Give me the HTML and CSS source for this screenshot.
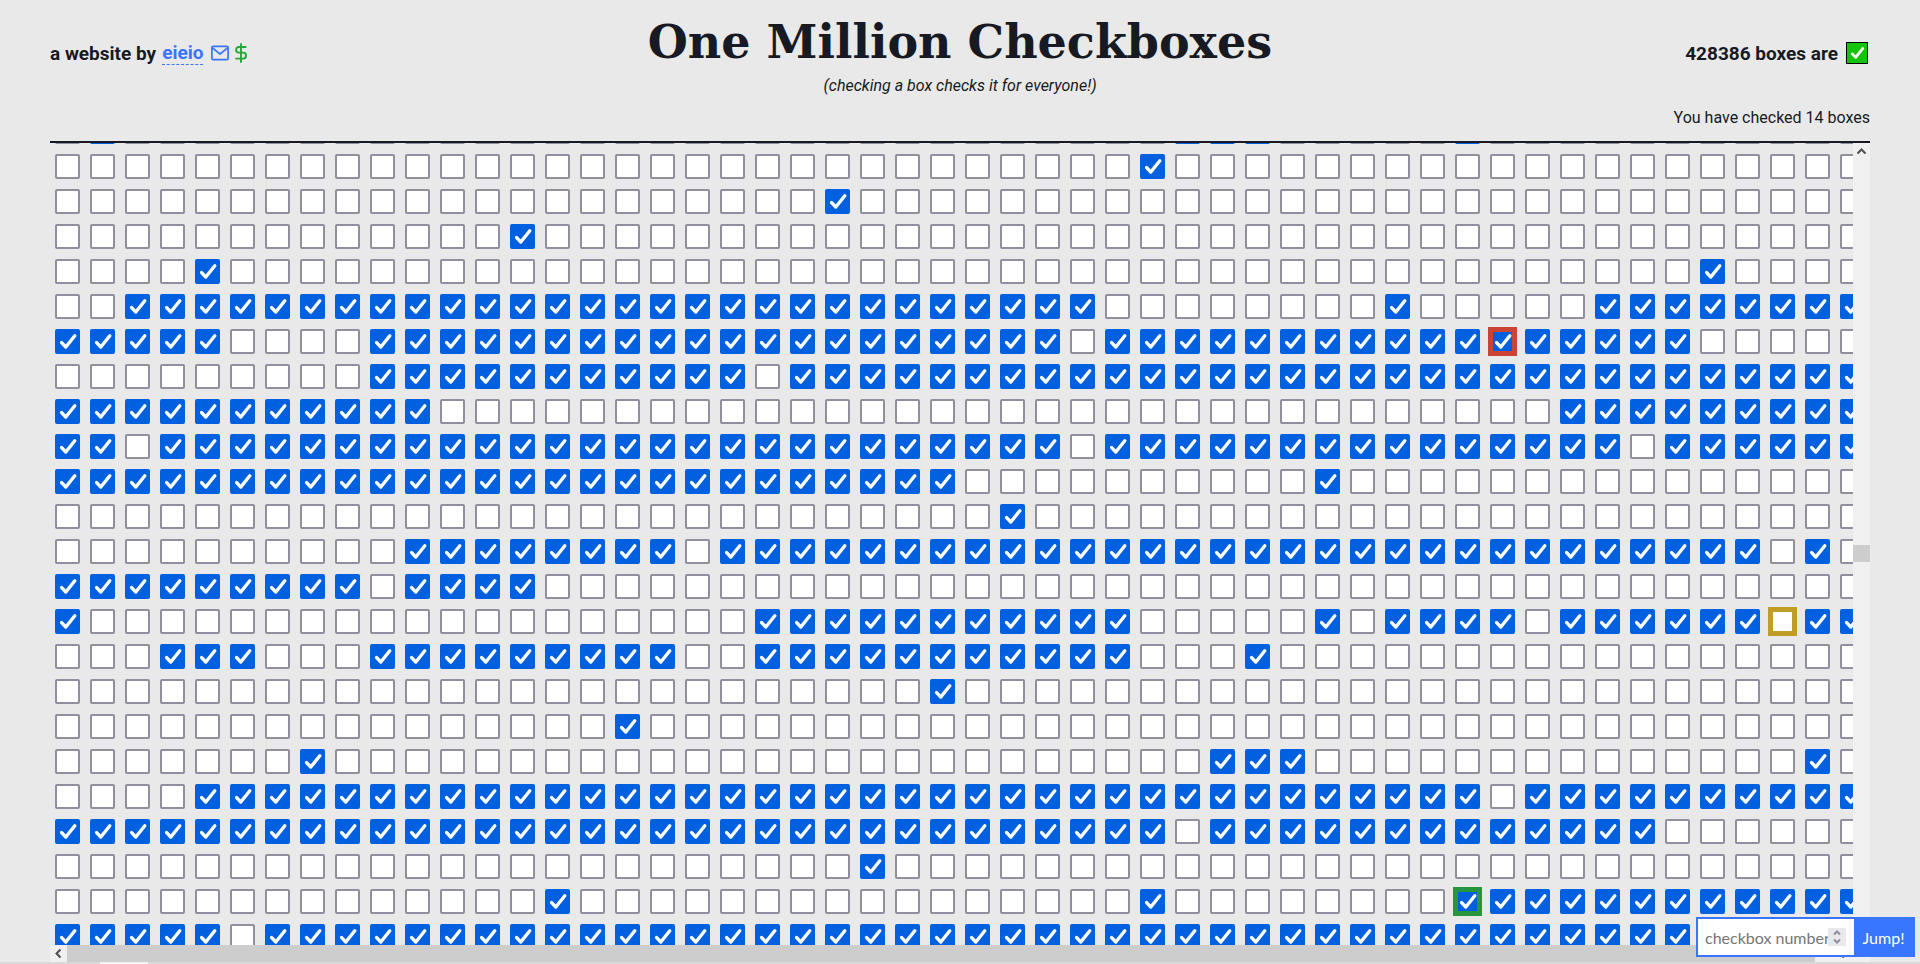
FILE: index.html
```html
<!DOCTYPE html>
<html lang="en">
<head>
<meta charset="utf-8">
<meta name="viewport" content="width=device-width, initial-scale=1">
<title>One Million Checkboxes</title>
<link rel="stylesheet" href="styles.css">
</head>
<body>

<!-- check mark shared by every box -->
<svg class="defs" aria-hidden="true">
  <symbol id="check" viewBox="0 0 25 25">
    <path d="M6.6 13.6 L10.8 18 L19.8 6.8" fill="none" stroke="#fff" stroke-width="3.4" stroke-linecap="round" stroke-linejoin="round"/>
  </symbol>
</svg>

<header class="header">
  <div class="byline">
    <span>a website by</span>
    <a class="author" href="#">eieio</a>
    <a class="icon-link" href="#" aria-label="email">
      <svg width="18" height="16" viewBox="0 0 18 16" fill="none" stroke="#3876ff" stroke-width="1.7" stroke-linejoin="round">
        <rect x="0.9" y="1.4" width="16.2" height="13.2" rx="1.2"/>
        <path d="M1 2.6 L9 9 L17 2.6"/>
      </svg>
    </a>
    <a class="icon-link" href="#" aria-label="donate">
      <svg width="12" height="20" viewBox="0 0 12 20" fill="none" stroke="#25a638" stroke-width="1.9" stroke-linecap="round" stroke-linejoin="round">
        <path d="M6 1 V19"/>
        <path d="M10.6 4 H3.8 C0.2 4 0.2 9.6 3.8 9.6 H8.2 C12 9.6 12 15.6 8.2 15.6 H1"/>
      </svg>
    </a>
  </div>
  <div class="heading">
    <h1>One Million Checkboxes</h1>
    <p class="subtitle">(checking a box checks it for everyone!)</p>
  </div>
  <div class="counts">
    <p class="total">428386 boxes are <span class="total-box"><svg width="20" height="20"><use href="#check"/></svg></span></p>
    <p class="mine">You have checked 14 boxes</p>
  </div>
</header>

<main class="board">
  <div class="viewport" id="viewport">
    <div class="grid" id="grid"></div>
  </div>
  <div class="scroll-y">
    <svg class="arrow" width="17" height="17"><path d="M4.5 10.5 L8.5 6.5 L12.5 10.5"/></svg>
    <div class="thumb-y"></div>
  </div>
  <div class="scroll-x">
    <svg class="arrow" width="17" height="17"><path d="M10.5 4.5 L6.5 8.5 L10.5 12.5"/></svg>
    <div class="thumb-x"></div>
    <svg class="arrow" width="17" height="17"><path d="M6.5 4.5 L10.5 8.5 L6.5 12.5"/></svg>
  </div>
  <div class="corner"></div>
</main>
<div class="edge"></div>

<form class="jump">
  <div class="field">
    <input type="text" inputmode="numeric" placeholder="checkbox number" aria-label="checkbox number">
    <svg class="spin" width="18" height="18"><path d="M6 6.5 L9 3.5 L12 6.5 M6 11.5 L9 14.5 L12 11.5"/></svg>
  </div>
  <button type="button">Jump!</button>
</form>

<script src="boxes.js"></script>
</body>
</html>
```
FILE: styles.css
```css
* {box-sizing: border-box}

body {
  margin: 0;
  height: 100vh;
  display: flex;
  flex-direction: column;
  overflow: hidden;
  background: #e9e9e9;
  color: #171a23;
  font-family: Roboto, sans-serif;
}

h1, p {margin: 0;}

.defs {
  position: absolute;
  width: 0;
  height: 0;
}

/* Header */
.header {
  display: grid;
  grid-template-columns: 1fr auto 1fr;
  height: 141px;
  padding: 0 50px;
}

.byline {
  display: flex;
  align-items: center;
  height: 28px;
  margin-top: 39px;
  gap: 6px;
  font-size: 19px;
  font-weight: 700;
}

.author {
  color: #3876ff;
  text-decoration: none;
  line-height: 23px;
  border-bottom: 1px dashed #3876ff;
}

.icon-link {
  display: flex;
  margin-left: 2px;
}

.icon-link + .icon-link {
  margin-left: 0;
}

.heading {
  text-align: center;
}

h1 {
  margin-top: 8px;
  font-family: "DejaVu Serif", serif;
  font-size: 46px;
  font-weight: 700;
  line-height: 68px;
}

.subtitle {
  font-size: 16px;
  font-style: italic;
  line-height: 20px;
}

.counts {
  text-align: right;
}

.total {
  display: flex;
  justify-content: flex-end;
  align-items: center;
  gap: 8px;
  height: 28px;
  margin-top: 39px;
  padding-right: 2px;
  font-size: 19px;
  font-weight: 700;
}

.total-box {
  display: flex;
  width: 22px;
  height: 22px;
  background: #14c40c;
  border: 1px solid #000;
}

.mine {
  margin-top: 41px;
  font-size: 16px;
  line-height: 20px;
}

/* Board */
.board {
  flex: 1;
  min-height: 0;
  display: grid;
  grid-template-columns: 1fr 17px;
  grid-template-rows: 1fr 17px;
  margin: 0 50px;
  border-top: 2px solid #171a23;
}

.viewport {
  min-width: 0;
  min-height: 0;
  overflow: hidden;
}

.grid {
  display: grid;
  grid-template-columns: repeat(52, 25px);
  grid-auto-rows: 25px;
  gap: 10px;
  padding: 0 5px;
}

.cell {
  display: grid;
}

.cell > * {
  grid-area: 1 / 1;
}

.cell input {
  appearance: none;
  width: 25px;
  height: 25px;
  margin: 0;
  background: #fff;
  border: 2px solid #8f8f9d;
  border-radius: 2px;
}

.cell input:checked {
  background: #0060df;
  border-color: #0060df;
}

.cell svg {
  width: 25px;
  height: 25px;
  pointer-events: none;
}

/* boxes picked out by colour */
.mark input {
  outline: 5px solid;
  outline-offset: -3px;
  border-radius: 0;
}

.red input {outline-color: #cb4335;}
.gold input {outline-color: #c09d27;}
.green input {outline-color: #27963c;}

/* Scrollbars */
.scroll-x, .scroll-y, .corner {
  background: #f0f0f0;
}

.scroll-y {
  display: flex;
  flex-direction: column;
  justify-content: space-between;
}

.thumb-y {
  height: 17px;
  margin-bottom: 383px;
  background: #cdcdcd;
}

.scroll-x {
  display: flex;
}

.thumb-x {
  flex: 1;
  margin-right: 21px;
  background: #cdcdcd;
}

.arrow {
  fill: none;
  stroke: #505050;
  stroke-width: 2;
}

.edge {
  height: 2px;
  background: linear-gradient(#f3f3f3, #f3f3f3) 100px 0 / 48px 2px no-repeat #d9d9d9;
}

/* Jump form */
.jump {
  position: absolute;
  right: 5px;
  bottom: 7px;
  display: flex;
  height: 40px;
  border: 2px solid #3876ff;
  background: #3876ff;
}

.field {
  display: flex;
  align-items: center;
  width: 156px;
  padding: 0 8px 0 7px;
  background: #fff;
}

.field input {
  flex: 1;
  min-width: 0;
  padding: 0;
  border: 0;
  outline: 0;
  font: 16px Lato, sans-serif;
}

.field input::placeholder {
  color: #757575;
}

.spin {
  background: #e9e9ed;
  fill: none;
  stroke: #8f8f9d;
  stroke-width: 2;
}

.jump button {
  width: 59px;
  padding: 0;
  border: 0;
  background: #3876ff;
  color: #fff;
  font: 16px Lato, sans-serif;
}
```
FILE: boxes.js
```js
var COLUMNS = 52;

// checked ranges of each row, [from, to] or a single column
var rows = [
  [1, [32, 34], 40],
  [31],
  [22],
  [13],
  [4, 47],
  [[2, 29], 38, [44, 51]],
  [[0, 4], [9, 28], [30, 46]],
  [[9, 19], [21, 51]],
  [[0, 10], [43, 51]],
  [[0, 1], [3, 28], [30, 44], [46, 51]],
  [[0, 25], 36],
  [27],
  [[10, 17], [19, 48], 50],
  [[0, 8], [10, 13]],
  [0, [20, 30], 36, [38, 41], [43, 48], [50, 51]],
  [[3, 5], [9, 17], [20, 30], 34],
  [25],
  [16],
  [7, [33, 35], 50],
  [[4, 40], [42, 51]],
  [[0, 31], [33, 45]],
  [23],
  [14, 31, [40, 51]],
  [[0, 4], [6, 51]]
];

var marks = {"6-41": "red", "14-49": "gold", "22-40": "green"};

function is_checked(ranges, column) {
  return ranges.some(function (r) {
    return Array.isArray(r) ? column >= r[0] && column <= r[1] : r === column;
  });
}

var html = "";
rows.forEach(function (ranges, row) {
  for (var column = 0; column < COLUMNS; column++) {
    var checked = is_checked(ranges, column);
    var mark = marks[row + "-" + column];
    html += '<label class="cell' + (mark ? " mark " + mark : "") + '">' +
      '<input type="checkbox" aria-label="row ' + row + ' box ' + column + '"' + (checked ? " checked" : "") + '>' +
      (checked ? '<svg aria-hidden="true"><use href="#check"/></svg>' : "") +
      '</label>';
  }
});
document.getElementById("grid").innerHTML = html;

// start part way into the first row
document.getElementById("viewport").scrollTop = 24;
```
